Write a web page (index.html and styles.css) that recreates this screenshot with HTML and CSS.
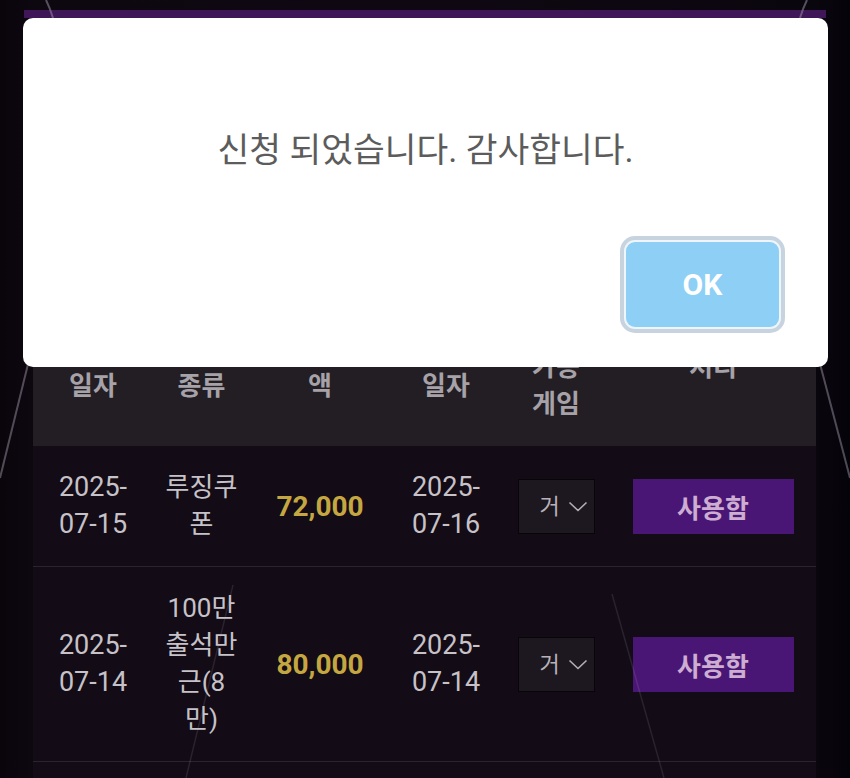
FILE: index.html
```html
<!DOCTYPE html>
<html lang="ko">
<head>
<meta charset="utf-8">
<title>쿠폰함</title>
<link rel="stylesheet" href="styles.css">
</head>
<body>
<div class="page">
  <div class="band"></div>
  <section class="content">
    <div class="intro">
      <h1 class="intro-title">쿠폰함</h1>
    </div>
    <table class="coupons">
      <colgroup>
        <col class="w1"><col class="w2"><col class="w3"><col class="w4"><col class="w5"><col class="w6">
      </colgroup>
      <thead>
        <tr>
          <th>지급<br>일자</th>
          <th class="narrow">쿠폰<br>종류</th>
          <th>지급<br>액</th>
          <th>만료<br>일자</th>
          <th>사용<br>가능<br>게임</th>
          <th>처리</th>
        </tr>
      </thead>
      <tbody>
        <tr>
          <td class="date">2025-<span class="nw">07-15</span></td>
          <td class="narrow">루징쿠폰</td>
          <td class="amount">72,000</td>
          <td class="date">2025-<span class="nw">07-16</span></td>
          <td><div class="select"><span>거</span><svg class="chev" viewBox="0 0 20 11" width="20" height="11"><path d="M1.5 1.5 L10 9.5 L18.5 1.5" fill="none" stroke="#b3aeb7" stroke-width="1.6"/></svg></div></td>
          <td><button class="use">사용함</button></td>
        </tr>
        <tr>
          <td class="date">2025-<span class="nw">07-14</span></td>
          <td class="narrow">100만출석만근(8만)</td>
          <td class="amount">80,000</td>
          <td class="date">2025-<span class="nw">07-14</span></td>
          <td><div class="select"><span>거</span><svg class="chev" viewBox="0 0 20 11" width="20" height="11"><path d="M1.5 1.5 L10 9.5 L18.5 1.5" fill="none" stroke="#b3aeb7" stroke-width="1.6"/></svg></div></td>
          <td><button class="use">사용함</button></td>
        </tr>
        <tr class="next">
          <td colspan="6"></td>
        </tr>
      </tbody>
    </table>
  </section>
  <svg class="deco" viewBox="0 0 850 778" width="850" height="778">
    <path d="M46 0 Q50 8 53 18" class="ln-top"/>
    <path d="M807 0 Q803 8 800 18" class="ln-top"/>
    <path d="M31 352 L0 478" class="ln-side"/>
    <path d="M819 360 L850 478" class="ln-side"/>
    <path d="M233 585 L186 778" class="ln-faint"/>
    <path d="M612 594 L664 778" class="ln-faint"/>
  </svg>
</div>
<div class="overlay">
  <div class="modal" role="dialog">
    <p class="msg">신청 되었습니다. 감사합니다.</p>
    <div class="actions">
      <button class="ok">OK</button>
    </div>
  </div>
</div>
</body>
</html>
```
FILE: styles.css
```css
* { box-sizing: border-box; }

body {
  margin: 0;
  background: #07040a;
  font-family: Roboto, "Noto Sans CJK KR", sans-serif;
}

.page {
  position: relative;
  width: 850px;
  height: 778px;
  overflow: hidden;
  background: linear-gradient(90deg, #0a050b 0, #0d0710 33px, #0f0812 50%, #0a060e 816px, #05030a 100%);
}

.band {
  height: 8px;
  margin: 10px 24px 0;
  background: #3f1657;
}

.content {
  padding: 0 34px 0 33px;
}

.intro {
  height: 271px;
  padding-top: 40px;
}

.intro-title {
  margin: 0;
  color: #ddd;
  font-size: 30px;
  text-align: center;
}

.coupons {
  width: 783px;
  border-collapse: collapse;
  table-layout: fixed;
}

.w1 { width: 120px; }
.w2 { width: 97px; }
.w3 { width: 140px; }
.w4 { width: 112px; }
.w5 { width: 108px; }
.w6 { width: 206px; }

.coupons th,
.coupons td {
  font-size: 26px;
  line-height: 37px;
  padding: 23px 4px;
  text-align: center;
  vertical-align: middle;
}

.coupons th {
  background: #221e24;
  color: #a6a2a8;
  font-weight: 700;
}

.coupons td {
  background: #130b15;
  color: #c6c2c8;
  border-bottom: 1px solid #2a2430;
}

.coupons td.date { font-size: 27px; }

.coupons .next td { height: 120px; }

.nw { white-space: nowrap; }

.coupons .narrow {
  padding-left: 11px;
  padding-right: 11px;
}

.coupons td.amount {
  color: #c5a742;
  font-weight: 700;
  font-size: 28px;
}

.select {
  width: 77px;
  height: 55px;
  margin: 0 auto;
  display: flex;
  align-items: center;
  gap: 8px;
  padding-left: 21px;
  background: #1d181f;
  border: 1px solid #070508;
  color: #b8b3bb;
  font-size: 22px;
}

.chev { display: block; }

.use {
  display: block;
  width: 161px;
  height: 55px;
  margin: 0 auto;
  border: 0;
  background: #4a1675;
  color: #cdaed2;
  font-family: Roboto, "Noto Sans CJK KR", sans-serif;
  font-weight: 700;
  font-size: 26px;
}

.deco {
  position: absolute;
  left: 0;
  top: 0;
  pointer-events: none;
  fill: none;
}

.ln-top { stroke: rgba(150, 140, 160, 0.55); stroke-width: 2; }
.ln-side { stroke: rgba(190, 180, 200, 0.4); stroke-width: 2; }
.ln-faint { stroke: rgba(190, 180, 200, 0.14); stroke-width: 1.5; }

.overlay {
  position: fixed;
  inset: 0;
  padding: 18px 22px 0 23px;
}

.modal {
  height: 349px;
  background: #fff;
  border-radius: 10px;
  display: flex;
  flex-direction: column;
  padding: 111px 49px 40px;
}

.msg {
  margin: 0;
  font-size: 34.5px;
  line-height: 42px;
  color: #5c5c5c;
  text-align: center;
}

.actions {
  margin-top: auto;
  display: flex;
  justify-content: flex-end;
}

.ok {
  width: 153px;
  height: 85px;
  border: 0;
  border-radius: 9px;
  background: #8ecff5;
  color: #fff;
  font-family: Roboto, sans-serif;
  font-weight: 700;
  font-size: 30px;
  box-shadow: 0 0 0 2px #eef6fb, 0 0 0 6px #c7d4df;
}
```
